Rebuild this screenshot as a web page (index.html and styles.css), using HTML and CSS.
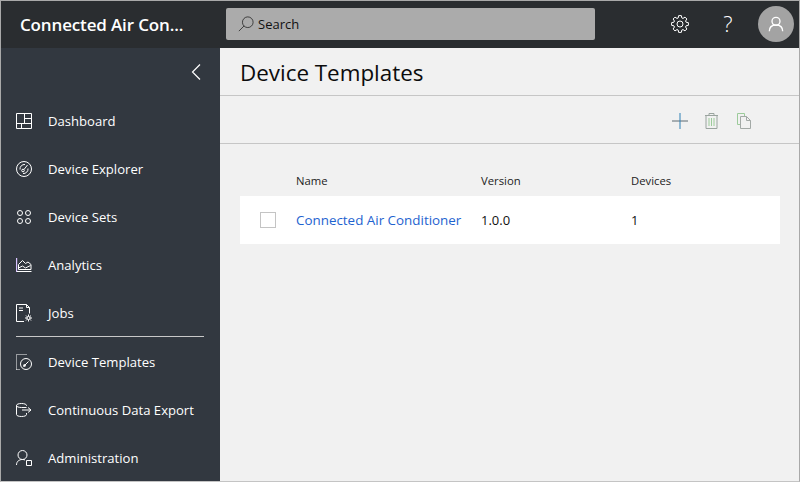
FILE: index.html
```html
<!DOCTYPE html>
<html lang="en">

<head>
     <meta charset="UTF-8">
     <title>Device Templates</title>
     <link rel="stylesheet" href="styles.css">
</head>

<body>
     <div class="app">
          <header class="topbar">
               <div class="brand">Connected Air Con...</div>
               <div class="search">
                    <svg class="search-icon" width="16" height="16" viewBox="0 0 18 18"><circle cx="11" cy="7" r="6" /><path d="M6.800 11.200L1 17" /></svg>
                    <span>Search</span>
               </div>
               <div class="top-actions">
                    <svg class="top-icon" width="18" height="18" viewBox="0 0 18 18"><circle cx="9" cy="9" r="3" /><path d="M7.160 2.980L7.670 .6H10.330L10.840 2.980L11.960 3.440L14 2.120L15.880 4L14.560 6.040L15.020 7.160L17.400 7.670V10.330L15.020 10.840L14.560 11.960L15.880 14L14 15.880L11.960 14.560L10.840 15.020L10.330 17.400H7.670L7.160 15.020L6.040 14.560L4 15.880L2.120 14L3.440 11.960L2.980 10.840L.6 10.330V7.670L2.980 7.160L3.440 6.040L2.120 4L4 2.120L6.040 3.440z" /></svg>
                    <span class="help">?</span>
                    <div class="avatar">
                         <svg width="24" height="24" viewBox="0 0 24 24"><circle cx="12" cy="8" r="6" /><path d="M2 23c0-6 4-9.500 10-9.500s10 3.500 10 9.500" /></svg>
                    </div>
               </div>
          </header>

          <div class="main">
               <nav class="sidebar">
                    <div class="collapse">
                         <svg width="10" height="16" viewBox="0 0 10 16"><path d="M9 .5L1.500 8 9 15.500" /></svg>
                    </div>
                    <a class="nav-item">
                         <svg width="16" height="16" viewBox="0 0 16 16"><path d="M.5.500h15v15H.5zM8.500.500v10M.5 10.500h15M5.500 10.500v5M8.500 5.500h7" /></svg>
                         <span>Dashboard</span>
                    </a>
                    <a class="nav-item">
                         <svg width="16" height="16" viewBox="0 0 16 16"><circle cx="8" cy="8" r="7.500" /><path d="M4 8.500A4.500 4.500 0 0 1 9 3.500M12 7.500A4.500 4.500 0 0 1 7 12.500" /><circle cx="7" cy="9.500" r="1.300" /><path d="M8 8.500l3.500-4.500" /></svg>
                         <span>Device Explorer</span>
                    </a>
                    <a class="nav-item">
                         <svg width="16" height="16" viewBox="0 0 16 16"><circle cx="4" cy="4" r="2.500" /><circle cx="12" cy="4" r="2.500" /><circle cx="4" cy="12" r="2.500" /><circle cx="12" cy="12" r="2.500" /></svg>
                         <span>Device Sets</span>
                    </a>
                    <a class="nav-item">
                         <svg width="16" height="14" viewBox="0 0 16 14"><path class="accent" d="M.5 0v14" /><path d="M1 13.500h14.500" /><path d="M2.500 6.500L6.500 2.500l3 3 2.500-1.500 3 2.500v5h-12.500z" /><path d="M2.500 10l4-2 3 2 5-2.500" /></svg>
                         <span>Analytics</span>
                    </a>
                    <a class="nav-item">
                         <svg width="16" height="18" viewBox="0 0 16 18"><path d="M8 17.500H.5V.5h10l3 3v6" /><path d="M10.500.5v3h3M3 4h4M3 6.500h4" /><circle cx="12.500" cy="14" r="1.500" /><path d="M12.500 10.500v2M12.500 15.500v2M9 14h2M14 14h2M10 11.500l1.400 1.400M13.600 15.100l1.400 1.400M15 11.500l-1.400 1.400M11.400 15.100L10 16.500" /></svg>
                         <span>Jobs</span>
                    </a>
                    <div class="nav-divider"></div>
                    <a class="nav-item">
                         <svg width="16" height="16" viewBox="0 0 16 16"><path class="dotted" d="M.5 15.500V.5h11" /><path class="dotted" d="M.5 15.500h3" /><circle cx="10" cy="10" r="5.500" /><path d="M7.500 12.500l5-5" /><circle cx="8.500" cy="11.500" r="1" /></svg>
                         <span>Device Templates</span>
                    </a>
                    <a class="nav-item">
                         <svg width="16" height="14" viewBox="0 0 16 14"><path d="M10.500 3V2.500C10.500 1.300 8.500.5 5.500.5S.5 1.300.5 2.500v9c0 1.200 2 2 5 2s5-.8 5-2V10" /><path d="M.5 2.500c0 1.200 2 2 5 2h5" /><path d="M6 7h9M12 4.500L15 7l-3 2.500" /></svg>
                         <span>Continuous Data Export</span>
                    </a>
                    <a class="nav-item">
                         <svg width="16" height="16" viewBox="0 0 16 16"><circle cx="6.500" cy="5" r="4.500" /><path d="M.5 15c0-3.500 2.500-5.500 6-5.500 1 0 2 .2 2.500.5" /><path class="solid" d="M10.500 10.500h5v5h-5z" /></svg>
                         <span>Administration</span>
                    </a>
               </nav>

               <main class="content">
                    <h1 class="page-title">Device Templates</h1>
                    <div class="toolbar">
                         <svg class="tool-add" width="16" height="16" viewBox="0 0 16 16"><path d="M0 8h16" /><path class="tool-blue" d="M8 0v16" /></svg>
                         <svg class="tool-delete" width="13" height="16" viewBox="0 0 13 16"><path d="M0 2.500h13M4 2.500V.5h5v2M1 2.500v13h11v-13" /><path class="tool-green" d="M4 5v8M6.500 5v8M9 5v8" /></svg>
                         <svg class="tool-copy" width="14" height="16" viewBox="0 0 14 16"><path class="tool-green" d="M3.500 11.500h-3V.5h7v3" /><path d="M3.500 3.500h6l4 4v8h-10zM9.500 3.500v4h4" /></svg>
                    </div>
                    <section class="list">
                         <div class="row row-head">
                              <span></span>
                              <span>Name</span>
                              <span>Version</span>
                              <span>Devices</span>
                         </div>
                         <div class="row row-item">
                              <span class="check"></span>
                              <a class="item-link">Connected Air Conditioner</a>
                              <span>1.0.0</span>
                              <span>1</span>
                         </div>
                    </section>
               </main>
          </div>
     </div>
</body>

</html>
```

FILE: styles.css
```css
* {
     margin: 0;
     padding: 0;
     box-sizing: border-box;
}

body {
     width: 800px;
     height: 482px;
     overflow: hidden;
     font-family: "Open Sans", "Noto Sans", sans-serif;
     color: #1a1a1a;
}

svg {
     fill: none;
     stroke: currentColor;
     stroke-width: 1;
     flex: none;
}

.app {
     display: flex;
     flex-direction: column;
     height: 482px;
     border: 1px solid #a9a9a9;
     border-bottom-color: #c4c4c4;
}

.topbar {
     display: flex;
     align-items: center;
     height: 47px;
     flex: none;
     padding-bottom: 1px;
     background: #2a2d30;
     color: #fff;
}

.brand {
     width: 219px;
     padding-left: 19px;
     font-size: 17px;
     font-weight: 600;
     letter-spacing: -0.15px;
     white-space: nowrap;
}

.search {
     display: flex;
     align-items: center;
     gap: 4px;
     width: 369px;
     height: 32px;
     margin-left: 6px;
     padding-left: 12px;
     background: #ababab;
     border-radius: 2px;
     color: #111;
     font-size: 13px;
}

.search-icon {
     color: #333;
}

.top-actions {
     display: flex;
     align-items: center;
     margin-left: auto;
     padding-right: 5px;
}

.top-icon {
     margin-right: 30px;
}

.help {
     width: 18px;
     margin: 0 21px 3px 0;
     text-align: center;
     font-size: 22px;
     font-weight: 300;
     line-height: 30px;
}

.avatar {
     display: flex;
     align-items: center;
     justify-content: center;
     width: 36px;
     height: 36px;
     border-radius: 50%;
     background: #a3a3a3;
     color: #fff;
}

.avatar svg {
     width: 16px;
     height: 16px;
     stroke-width: 2;
}

.main {
     display: flex;
     flex: 1;
     min-height: 0;
}

.sidebar {
     width: 219px;
     flex: none;
     background: #323840;
     color: #fff;
}

.collapse {
     display: flex;
     justify-content: flex-end;
     align-items: center;
     height: 49px;
     padding: 0 19px 2px 0;
}

.collapse svg {
     stroke-width: 1.200;
}

.nav-item {
     display: flex;
     align-items: center;
     gap: 16px;
     height: 48px;
     padding-left: 15px;
     font-size: 13.100px;
}

.nav-divider {
     height: 1px;
     margin: -1px 16px 1px 15px;
     background: #c8c8c8;
}

.accent {
     stroke: #d8c4ff;
     stroke-width: 1.400;
}

.dotted {
     stroke-dasharray: 1 1;
}

.solid {
     stroke: #fff;
}

.content {
     flex: 1;
     background: #f1f1f1;
}

.page-title {
     height: 48px;
     padding: 10px 0 0 20px;
     border-bottom: 1px solid #c6c6c6;
     font-size: 22.400px;
     font-weight: 400;
     line-height: 30px;
     color: #0c0c0c;
}

.toolbar {
     display: flex;
     align-items: center;
     justify-content: flex-end;
     height: 48px;
     padding: 2px 48px 0 0;
     border-bottom: 1px solid #c6c6c6;
}

.tool-add {
     color: #5d6a72;
     margin-right: 17px;
}

.tool-blue {
     stroke: #2f80b5;
}

.tool-delete {
     color: #9aa49f;
     margin-right: 19px;
}

.tool-copy {
     color: #a3a9a6;
}

.tool-green {
     stroke: #9ccb9a;
}

.list {
     margin: 22px 19px 0 20px;
}

.row {
     display: grid;
     grid-template-columns: 56px 185px 150px 1fr;
     align-items: center;
     font-size: 13px;
}

.row-head {
     height: 30px;
     padding-bottom: 2px;
     font-size: 11.300px;
     color: #222;
}

.row-item {
     height: 48px;
     background: #fff;
     color: #111;
}

.check {
     width: 16px;
     height: 16px;
     margin-left: 20px;
     border: 1px solid #c4c4c4;
}

.item-link {
     font-size: 13.400px;
     color: #1e63d0;
}
```
